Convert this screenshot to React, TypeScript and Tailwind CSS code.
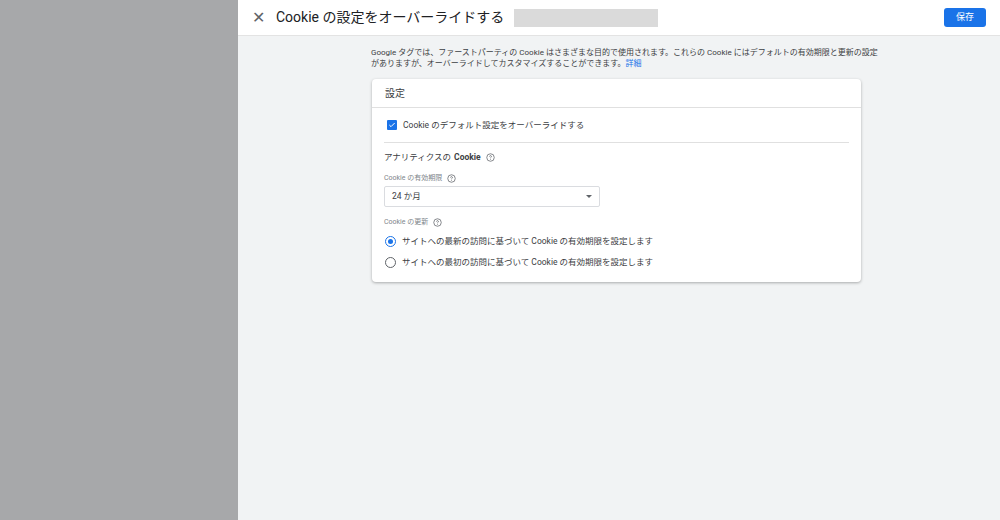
export default function App() {
  const f = { fontFamily: 'Roboto, "Noto Sans CJK JP", sans-serif' };
  const Help = () => (
    <svg width="9" height="9" viewBox="0 0 24 24" className="ml-[5px]"><circle cx="12" cy="12" r="10" fill="none" stroke="#5f6368" strokeWidth="2"/><path d="M9.5 9.5a2.5 2.5 0 1 1 3.5 2.3c-.7.4-1 .9-1 1.7v.5" fill="none" stroke="#5f6368" strokeWidth="2"/><circle cx="12" cy="17.5" r="1.2" fill="#5f6368"/></svg>
  );
  return (
    <div style={f} className="w-[1000px] h-[520px] flex bg-[#f1f3f4] overflow-hidden">
      <div className="w-[238px] shrink-0 bg-[#a7a8aa]" />
      <div className="w-[2px] bg-[#8e8f91]" />
      <div className="flex-1 flex flex-col">
        <div className="h-[36px] bg-white border-b border-[#e3e3e3] flex items-center pl-[14px] pr-[15px]">
          <span className="text-[#5f6368] text-[16px] w-[12px] leading-none">✕</span>
          <span className="ml-[12px] text-[14px] text-[#202124]">Cookie の設定をオーバーライドする</span>
          <div className="ml-[10px] w-[144px] h-[18px] bg-[#dadada]" />
          <div className="ml-auto bg-[#1a73e8] text-white text-[9px] rounded-[3px] w-[42px] h-[19px] flex items-center justify-center">保存</div>
        </div>
        <div className="pl-[133px] pt-[11px] text-[8px] leading-[11px] text-[#3c4043] w-[630px] box-content">
          Google タグでは、ファーストパーティの Cookie はさまざまな目的で使用されます。これらの Cookie にはデフォルトの有効期限と更新の設定<br />がありますが、オーバーライドしてカスタマイズすることができます。<span className="text-[#1a73e8]">詳細</span>
        </div>
        <div className="ml-[134px] mt-[10px] w-[489px] bg-white rounded-[4px] shadow-[0_1px_3px_rgba(0,0,0,0.3)]">
          <div className="h-[29px] border-b border-[#e0e0e0] flex items-center pl-[13px] text-[10px] text-[#3c4043]">設定</div>
          <div className="mx-[12px] h-[35px] border-b border-[#e0e0e0] flex items-center pl-[3px]">
            <div className="w-[10px] h-[10px] bg-[#1a73e8] rounded-[1px] flex items-center justify-center">
              <svg width="8" height="8" viewBox="0 0 24 24"><path d="M4 12l5 5 11-11" fill="none" stroke="white" strokeWidth="3"/></svg>
            </div>
            <span className="ml-[6px] text-[8.5px] text-[#3c4043]">Cookie のデフォルト設定をオーバーライドする</span>
          </div>
          <div className="px-[12px] pt-[8px] pb-[10px]">
            <div className="flex items-center text-[8.5px] text-[#3c4043]">アナリティクスの <b className="ml-[3px]">Cookie</b><Help /></div>
            <div className="mt-[9px] flex items-center text-[7px] text-[#80868b]">Cookie の有効期限<Help /></div>
            <div className="mt-[3px] w-[216px] h-[21px] border border-[#dadce0] rounded-[2px] flex items-center px-[7px] text-[8.5px] text-[#3c4043]">
              24 か月<span className="ml-auto w-0 h-0 border-l-[3px] border-r-[3px] border-t-[3px] border-l-transparent border-r-transparent border-t-[#5f6368]" />
            </div>
            <div className="mt-[10px] flex items-center text-[7px] text-[#80868b]">Cookie の更新<Help /></div>
            <div className="mt-[5px] flex items-center h-[18px] text-[8.5px] text-[#3c4043]">
              <div className="w-[11px] h-[11px] rounded-full border-[1.5px] border-[#1a73e8] flex items-center justify-center ml-[1px]"><div className="w-[5px] h-[5px] rounded-full bg-[#1a73e8]" /></div>
              <span className="ml-[6px]">サイトへの最新の訪問に基づいて Cookie の有効期限を設定します</span>
            </div>
            <div className="mt-[3px] flex items-center h-[18px] text-[8.5px] text-[#3c4043]">
              <div className="w-[11px] h-[11px] rounded-full border-[1.5px] border-[#5f6368] ml-[1px]" />
              <span className="ml-[6px]">サイトへの最初の訪問に基づいて Cookie の有効期限を設定します</span>
            </div>
          </div>
        </div>
      </div>
    </div>
  );
}
